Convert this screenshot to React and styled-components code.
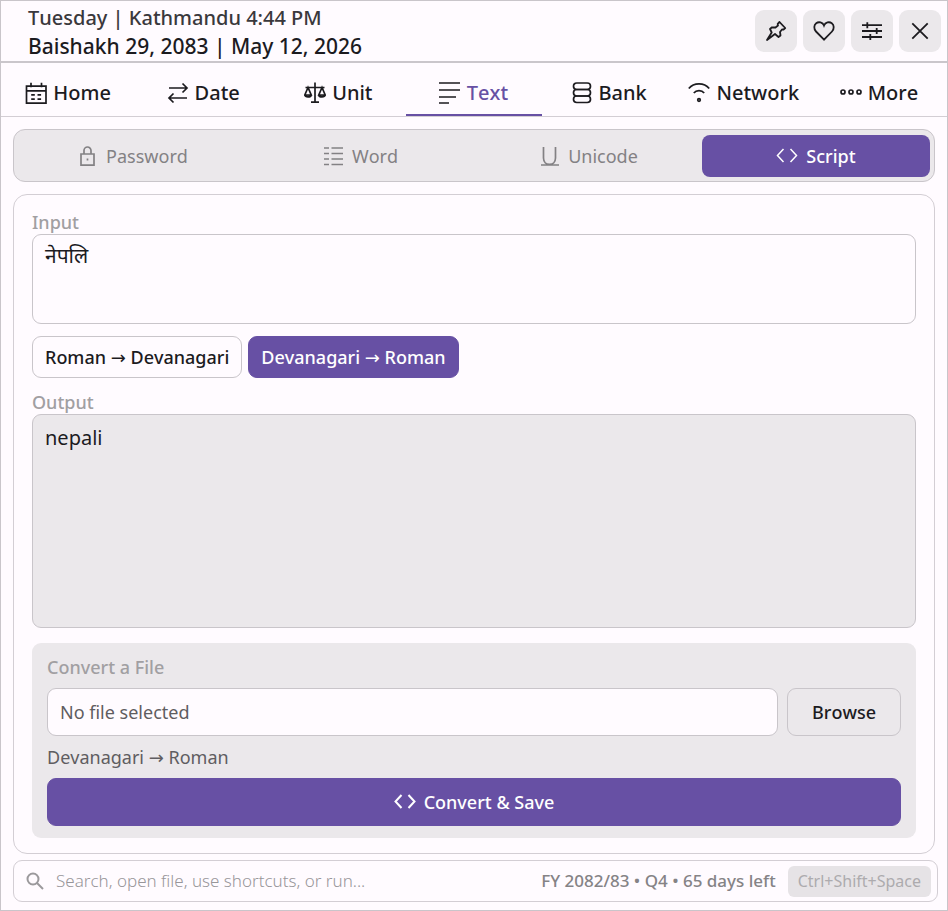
import React from 'react';
import styled, { createGlobalStyle } from 'styled-components';


const GlobalStyle = createGlobalStyle`
  *, *::before, *::after {
    box-sizing: border-box;
  }

  body {
    margin: 0;
    background: #fffbff;
  }

  button, input, textarea {
    font: inherit;
    color: inherit;
    margin: 0;
  }
`;

const Window = styled.div`
  min-height: 100vh;
  display: flex;
  flex-direction: column;
  border: 1px solid #c9c5ca;
  background: #fffbff;
  color: #1c1b1f;
  font-family: 'Noto Sans', 'Open Sans', sans-serif;
  font-size: 18px;
  font-kerning: none;
  line-height: 24px;
`;

const Header = styled.header`
  display: flex;
  align-items: center;
  justify-content: space-between;
  height: 62px;
  padding: 0 6px 0 27px;
  border-bottom: 2px solid #cac6cb;
`;

const Clock = styled.div`
  padding-top: 1px;
  font-weight: 500;
  line-height: 28px;
`;

const Today = styled.div`
  color: ${props => (props.$strong ? '#1c1b1f' : '#3a383c')};
  font-size: ${props => (props.$strong ? 21 : 20)}px;
`;

const Actions = styled.div`
  display: flex;
  gap: 6px;
`;

const IconButton = styled.button`
  display: flex;
  align-items: center;
  justify-content: center;
  width: 42px;
  height: 42px;
  padding: 0;
  border: 0;
  border-radius: 9px;
  background: #ebe8eb;
`;

const Nav = styled.nav`
  display: grid;
  grid-template-columns: repeat(7, 1fr);
  height: 54px;
  border-bottom: 1px solid #d3ced4;
`;

const NavTab = styled.button`
  display: flex;
  align-items: center;
  justify-content: center;
  gap: 6px;
  padding: 8px 1px 0 0;
  border: 0;
  border-bottom: 2px solid ${props => (props.$active ? '#6750a4' : 'transparent')};
  background: none;
  font-size: 20px;
  font-weight: 500;
  white-space: nowrap;

  & span {
    color: ${props => (props.$active ? '#6750a4' : 'inherit')};
  }
`;

const Main = styled.main`
  flex: 1;
  display: flex;
  flex-direction: column;
  gap: 12px;
  padding: 12px 12px 6px;
`;

const Segments = styled.div`
  display: grid;
  grid-template-columns: repeat(4, 1fr);
  padding: 5px 4px 4px;
  border: 1px solid #c9c5ca;
  border-radius: 12px;
  background: #ebe8eb;
`;

const Segment = styled.button`
  display: flex;
  align-items: center;
  justify-content: center;
  gap: 8px;
  height: 42px;
  padding: 0;
  border: 0;
  border-radius: 8px;
  background: ${props => (props.$active ? '#6750a4' : 'none')};
  color: ${props => (props.$active ? '#fff' : '#838184')};
  font-weight: ${props => (props.$active ? 500 : 400)};
`;

const Panel = styled.section`
  flex: 1;
  display: flex;
  flex-direction: column;
  padding: 15px 18px;
  border: 1px solid #d3ced4;
  border-radius: 14px;
`;

const Label = styled.label`
  color: #a19fa2;
  font-weight: 500;
`;

const TextBox = styled.textarea`
  display: block;
  width: 100%;
  height: 90px;
  padding: 6px 12px;
  border: 1px solid #c9c5ca;
  border-radius: 9px;
  outline: 0;
  resize: none;
  background: none;
  font-size: 21px;
  line-height: 28px;
`;

const OutputBox = styled(TextBox)`
  flex: 1;
  min-height: 120px;
  padding: 9px 12px;
  background: #ebe8eb;
  font-size: 20px;
`;

const Directions = styled.div`
  display: flex;
  gap: 6px;
  margin: 12px 0;
`;

const Button = styled.button`
  display: flex;
  align-items: center;
  justify-content: center;
  gap: 8px;
  height: ${props => (props.$tall ? 48 : 42)}px;
  padding: 0 ${props => (props.$tall ? 24 : 12)}px;
  border: 1px solid ${props => (props.$primary ? '#6750a4' : '#c9c5ca')};
  border-radius: 9px;
  background: ${props => (props.$primary ? '#6750a4' : 'none')};
  color: ${props => (props.$primary ? '#fff' : 'inherit')};
  font-weight: 500;
  white-space: nowrap;
`;

const Phrase = styled.span`
  white-space: pre;
`;

const Arrow = styled.span`
  font-family: 'DejaVu Sans', sans-serif;
  font-weight: 400;
  line-height: 1;
`;

const FileCard = styled.div`
  display: flex;
  flex-direction: column;
  gap: 9px;
  margin-top: 15px;
  padding: 12px 15px;
  border-radius: 9px;
  background: #ebe8eb;
`;

const FileRow = styled.div`
  display: flex;
  gap: 9px;
`;

const FileName = styled.input`
  flex: 1;
  min-width: 0;
  height: 48px;
  padding: 0 12px;
  border: 1px solid #c9c5ca;
  border-radius: 9px;
  outline: 0;
  background: #fffbff;
  color: #5f5d61;
`;

const Hint = styled.div`
  color: #5f5d61;
`;

const Footer = styled.footer`
  display: flex;
  align-items: center;
  gap: 12px;
  height: 42px;
  margin: 0 9px 8px 12px;
  padding: 0 6px 0 12px;
  border: 1px solid #d3ced4;
  border-radius: 9px;
  color: #9b999c;
  font-size: 17px;
`;

const Search = styled.input`
  flex: 1;
  min-width: 0;
  padding: 0;
  border: 0;
  outline: 0;
  background: none;
  color: #1c1b1f;
  font-weight: 300;

  &::placeholder {
    color: #98969a;
    opacity: 1;
  }
`;

const Fiscal = styled.div`
  color: #858386;
  font-weight: 500;
`;

const Shortcut = styled.kbd`
  padding: 3px 10px 4px;
  border-radius: 6px;
  background: #e6e3e6;
  color: #adabae;
  font-family: inherit;
  font-size: 16px;
`;


const Icon = ({ size = 22, width = 1.5, children }) =>
  <svg
    width={size}
    height={size}
    viewBox={`0 0 ${size} ${size}`}
    fill='none'
    stroke='currentColor'
    strokeWidth={width}
    aria-hidden='true'
  >
    {children}
  </svg>;

const icons = {
  home: <path d='M1.500 4.200h19.500v17H1.500zM1.500 8.800H21M6 .8v4.500M16.500 .8v4.500M6.200 12.800h3.600M12.500 12.800h3.600M6.200 17.200h3.600M12.500 17.200h3.600' />,
  date: <path d='M2 6h18M15.500 1.500 20 6l-4.500 4.500M20 16H2M6.500 11.500 2 16l4.500 4.500' />,
  unit: <path d='M11 .5V20M7 20.200h8M1.500 5.500h19M4 5.500.8 13h6.400zM18 5.500 14.800 13h6.400zM.8 13c.4 2.500 6 2.500 6.400 0M14.800 13c.4 2.500 6 2.500 6.400 0' />,
  text: <path d='M0 1h21M0 8h21M0 15h17M0 21h10' />,
  bank: (
    <>
      <rect x='2.500' y='1' width='17' height='6.500' rx='3.250' />
      <rect x='2.500' y='7.500' width='17' height='6.500' rx='3.250' />
      <rect x='2.500' y='14' width='17' height='6.500' rx='3.250' />
    </>
  ),
  network: (
    <>
      <path d='M.8 6.500c5-6.300 15.400-6.300 20.400 0M5.800 11c2.500-3.200 7.900-3.200 10.400 0' />
      <circle cx='11' cy='18' r='1.300' />
    </>
  ),
  more: (
    <>
      <circle cx='3' cy='10' r='2' />
      <circle cx='11' cy='10' r='2' />
      <circle cx='19' cy='10' r='2' />
    </>
  ),
};

const tabs = [
  ['home', 'Home'],
  ['date', 'Date'],
  ['unit', 'Unit'],
  ['text', 'Text'],
  ['bank', 'Bank'],
  ['network', 'Network'],
  ['more', 'More'],
];

const CodeIcon = ({ width }) =>
  <Icon width={width}><path d='M7.500 4 1.500 10.500l6 6.500M14.500 4l6 6.500-6 6.500' /></Icon>;

const tools = [
  ['Password', <Icon width={1.7}><path d='M5 9h13v11.200H5zM8 9V5.500a3.500 3.500 0 0 1 7 0V9M11.500 13.500v2' /></Icon>],
  ['Word', <Icon width={1.7}><path d='M2 3h5M2 8.500h5M2 14h5M2 19.500h5M9.500 3H21M9.500 8.500H21M9.500 14H21M9.500 19.500H21' /></Icon>],
  ['Unicode', <Icon width={1.7}><path d='M5.500 2v11c0 8.500 12 8.500 12 0V2M3 20h18' /></Icon>],
  ['Script', <CodeIcon />],
];

const Convert = ({ from, to }) =>
  <Phrase>{from} <Arrow>→</Arrow> {to}</Phrase>;

const App = () =>
  <>
    <GlobalStyle />
    <Window>
      <Header>
        <Clock>
          <Today>Tuesday | Kathmandu 4:44 PM</Today>
          <Today $strong>Baishakh 29, 2083 | May 12, 2026</Today>
        </Clock>
        <Actions>
          <IconButton aria-label='Pin'>
            <Icon width={1.8}><path strokeLinejoin='round' d='M14.500 2l5.700 6-1.700 1.700-1.500-.2-2 2.500.5 3.500-2 1.500-3.500-3L2 20l4.700-7.500L5 9l2-1.700 3.500.2 2.500-2-.3-1.700z' /></Icon>
          </IconButton>
          <IconButton aria-label='Favourite'>
            <Icon width={1.8}><path d='M11 19.700 3 11.500C.6 9 .8 5 3.200 3.200c2.500-1.800 6.500-1 7.800 2.300 1.300-3.300 5.300-4.100 7.800-2.300 2.400 1.800 2.600 5.800.2 8.300z' /></Icon>
          </IconButton>
          <IconButton aria-label='Settings'>
            <Icon width={1.8}><path d='M1 5.200h20M1 11h20M1 17h20M6.300 2.200v6M15.700 8v6M9.300 14v6' /></Icon>
          </IconButton>
          <IconButton aria-label='Close'>
            <Icon width={1.8}><path d='M3.300 3.300l15.400 15.400M18.700 3.300 3.300 18.700' /></Icon>
          </IconButton>
        </Actions>
      </Header>
      <Nav>
        {tabs.map(([icon, name]) =>
          <NavTab key={icon} $active={icon === 'text'}>
            <Icon width={1.7}>{icons[icon]}</Icon>
            <span>{name}</span>
          </NavTab>
        )}
      </Nav>
      <Main>
        <Segments>
          {tools.map(([name, icon]) =>
            <Segment key={name} $active={name === 'Script'}>
              {icon}
              {name}
            </Segment>
          )}
        </Segments>
        <Panel>
          <Label htmlFor='input'>Input</Label>
          <TextBox id='input' defaultValue='नेपलि' spellCheck={false} />
          <Directions>
            <Button><Convert from='Roman' to='Devanagari' /></Button>
            <Button $primary><Convert from='Devanagari' to='Roman' /></Button>
          </Directions>
          <Label htmlFor='output'>Output</Label>
          <OutputBox id='output' value='nepali' readOnly />
          <FileCard>
            <Label htmlFor='file'>Convert a File</Label>
            <FileRow>
              <FileName id='file' value='No file selected' readOnly />
              <Button $tall>Browse</Button>
            </FileRow>
            <Hint><Convert from='Devanagari' to='Roman' /></Hint>
            <Button $tall $primary>
              <CodeIcon width={2} />
              Convert &amp; Save
            </Button>
          </FileCard>
        </Panel>
      </Main>
      <Footer>
        <Icon size={18} width={2}>
          <circle cx='7' cy='7' r='5.500' />
          <path d='m11 11 6 6' />
        </Icon>
        <Search aria-label='Search' placeholder='Search, open file, use shortcuts, or run...' />
        <Fiscal>FY 2082/83 • Q4 • 65 days left</Fiscal>
        <Shortcut>Ctrl+Shift+Space</Shortcut>
      </Footer>
    </Window>
  </>;

export default App;
